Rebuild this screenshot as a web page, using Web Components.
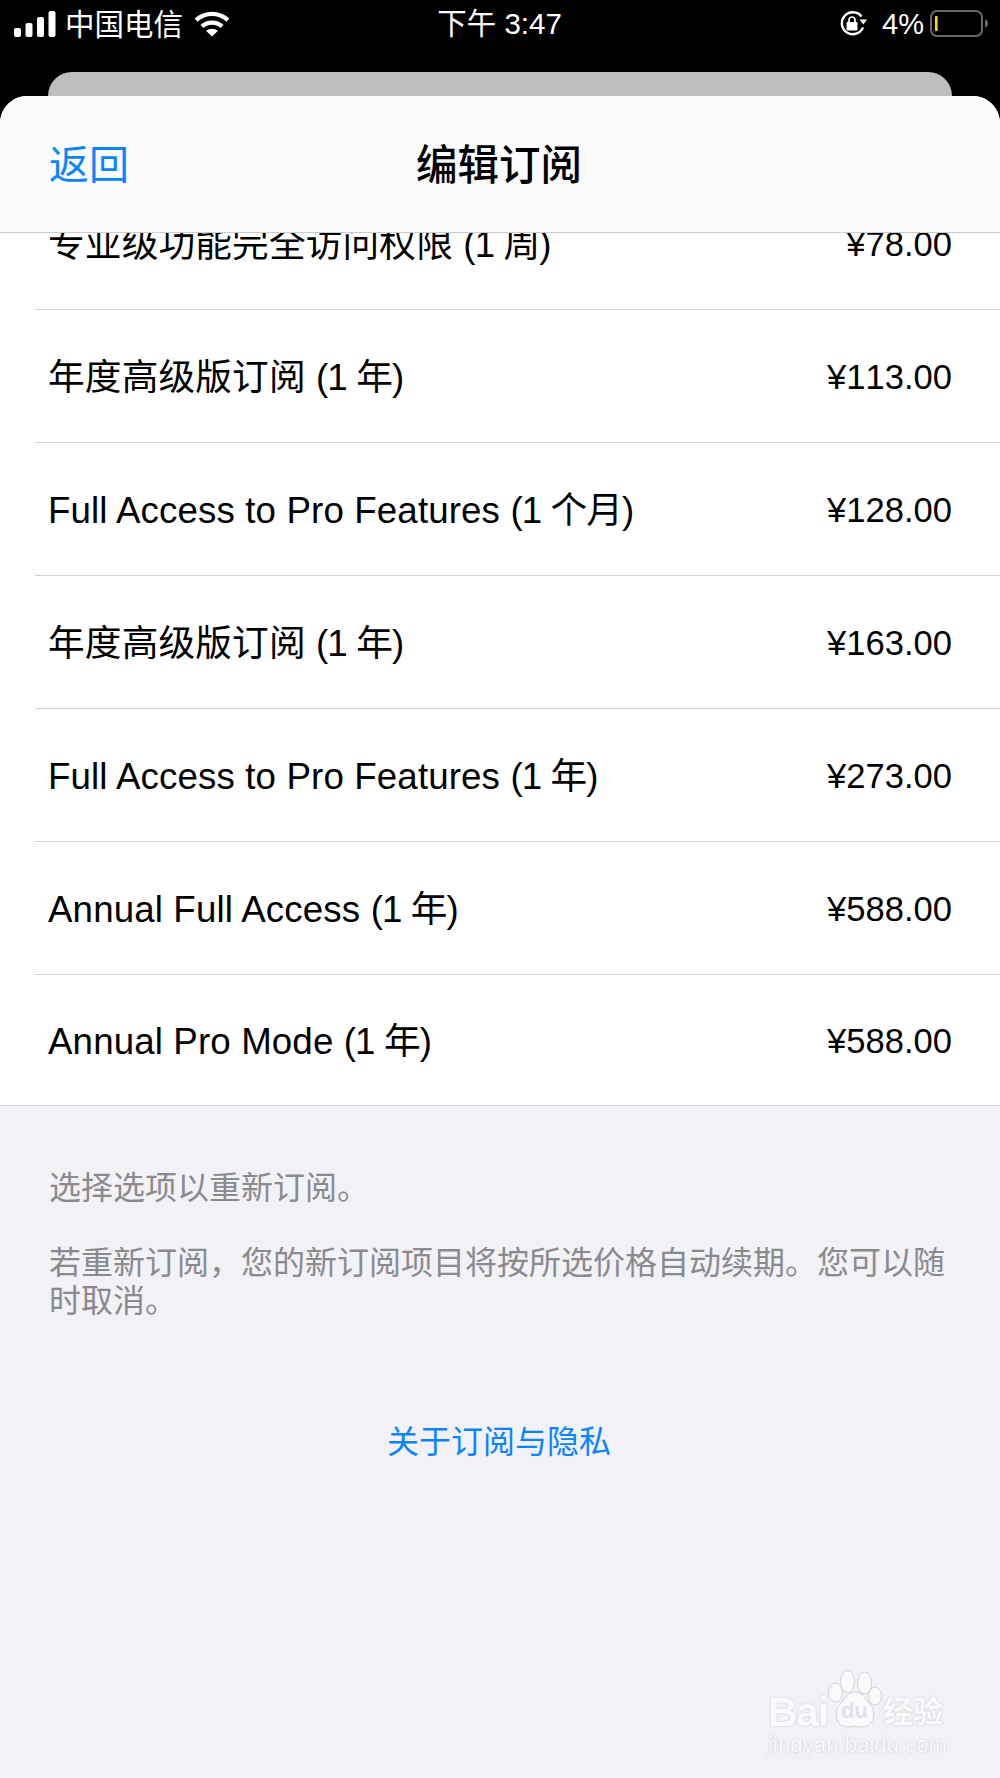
<!DOCTYPE html>
<html lang="zh">
<head>
<meta charset="utf-8">
<title>编辑订阅</title>
<style>
  html, body { margin: 0; background: #000; }
  body { width: 1000px; height: 1778px; overflow: hidden; font-family: "Liberation Sans", "Noto Sans CJK SC", sans-serif; }
</style>
</head>
<body>
<status-bar></status-bar>
<peek-card></peek-card>
<edit-sheet title-text="编辑订阅" back-text="返回">
  <price-row price="¥78.00">专业级功能完全访问权限 <span class="tail">(1 周)</span></price-row>
  <price-row price="¥113.00">年度高级版订阅 <span class="tail">(1 年)</span></price-row>
  <price-row price="¥128.00">Full Access to Pro Features <span class="tail">(1 个月)</span></price-row>
  <price-row price="¥163.00">年度高级版订阅 <span class="tail">(1 年)</span></price-row>
  <price-row price="¥273.00">Full Access to Pro Features <span class="tail">(1 年)</span></price-row>
  <price-row price="¥588.00">Annual Full Access <span class="tail">(1 年)</span></price-row>
  <price-row last price="¥588.00">Annual Pro Mode <span class="tail">(1 年)</span></price-row>
  <sheet-footer slot="footer"></sheet-footer>
</edit-sheet>
<baidu-mark></baidu-mark>

<script>
class StatusBar extends HTMLElement {
  constructor() {
    super()
    this.attachShadow({ mode: "open" })
    this.shadowRoot.innerHTML = `
      <style>
        :host { display: grid; grid-template-columns: 1fr auto 1fr; align-items: center; height: 44px; padding: 0 11px 28px 14px; color: #fff; font-size: 29.5px; }
        .left, .right { display: flex; align-items: center; }
        .left { gap: 9px; }
        .right { justify-content: flex-end; }
        .carrier { padding-bottom: 2px; }
        .time { margin-right: 4px; padding-bottom: 3px; }
        .pct { margin-left: 15px; margin-right: 6px; padding-top: 4px; font-size: 29px; }
        svg { display: block; margin-top: 2px; }
      </style>
      <div class="left">
        <svg width="42" height="26" viewBox="0 0 42 26" fill="#fff">
          <rect x="0" y="17" width="7" height="9" rx="2"/>
          <rect x="11.5" y="12" width="7" height="14" rx="2"/>
          <rect x="23" y="6" width="7" height="20" rx="2"/>
          <rect x="34.5" y="0" width="7" height="26" rx="2"/>
        </svg>
        <span class="carrier">中国电信</span>
        <svg width="36" height="26" viewBox="0 0 37 27" fill="none" stroke="#fff" stroke-width="4.4" style="margin-left:2px">
          <path d="M2 9.5C11.5 .8 25.500 .8 35 9.5"/>
          <path d="M8 16C14 10.6 23 10.6 29 16"/>
          <path d="M18.5 26.5L12.2 20.6C16 17.6 21 17.6 24.8 20.6Z" fill="#fff" stroke="none"/>
        </svg>
      </div>
      <div class="time">下午 3:47</div>
      <div class="right">
        <svg width="27" height="26" viewBox="0 0 27 26" fill="none">
          <path d="M21.6 5.5A11 11 0 1 0 23 16.5" stroke="#fff" stroke-width="2.4"/>
          <path d="M19.5 8.5h7.5l-3.7 5z" fill="#fff"/>
          <rect x="6.5" y="11" width="11" height="8.500" rx="1.2" fill="#fff"/>
          <path d="M9 11V9a3 3 0 0 1 6 0v2" stroke="#fff" stroke-width="1.7"/>
        </svg>
        <span class="pct">4%</span>
        <svg width="59" height="28" viewBox="0 0 59 28" fill="none">
          <rect x="1" y="1" width="51" height="25" rx="6" stroke="#6a6a6a" stroke-width="2"/>
          <rect x="5" y="6" width="2.6" height="15" rx="1" fill="#ffd60a"/>
          <path d="M55 9.5c2 .6 3 2 3 4s-1 3.400-3 4z" fill="#6a6a6a"/>
        </svg>
      </div>
    `
  }
}

class PeekCard extends HTMLElement {
  constructor() {
    super()
    this.attachShadow({ mode: "open" })
    this.shadowRoot.innerHTML = `
      <style>
        :host { display: block; height: 24px; margin: 0 48px; background: #bdbec0; border-radius: 24px 24px 0 0; }
      </style>
    `
  }
}

class EditSheet extends HTMLElement {
  constructor() {
    super()
    this.attachShadow({ mode: "open" })
    this.shadowRoot.innerHTML = `
      <style>
        :host { display: block; height: 1682px; overflow: hidden; background: #f1f1f6; border-radius: 27px 27px 0 0; }
        .nav {
          position: relative; z-index: 1;
          display: grid; grid-template-columns: 1fr auto 1fr; align-items: center;
          height: 132px; padding: 0 51px 4px 49px;
          background: #fbfbfd; border-bottom: 1px solid #cdcdcf;
        }
        .back { color: #0a84ff; font-size: 40px; }
        .title { color: #000; font-size: 41.5px; font-weight: 500; }
        .list { margin-top: -56px; background: #fff; border-bottom: 1px solid #d2d2d4; }
      </style>
      <div class="nav">
        <span class="back"></span>
        <span class="title"></span>
      </div>
      <div class="list"><slot></slot></div>
      <slot name="footer"></slot>
    `
    this.shadowRoot.querySelector(".back").textContent = this.getAttribute("back-text")
    this.shadowRoot.querySelector(".title").textContent = this.getAttribute("title-text")
  }
}

class PriceRow extends HTMLElement {
  constructor() {
    super()
    this.attachShadow({ mode: "open" })
    this.shadowRoot.innerHTML = `
      <style>
        :host { display: block; padding-left: 35px; color: #000; font-size: 36.7px; }
        .row { display: flex; justify-content: space-between; align-items: center; height: 132px; padding-right: 48px; padding-left: 13px; border-bottom: 1px solid #d2d2d4; }
        :host([last]) .row { height: 130px; border-bottom: 0; }
        .label { padding-bottom: 5px; letter-spacing: .13px; }
        ::slotted(.tail) { letter-spacing: -.9px; }
        .price { padding-top: 2px; font-size: 34.6px; font-kerning: none; }
      </style>
      <div class="row">
        <span class="label"><slot></slot></span>
        <span class="price"></span>
      </div>
    `
    this.shadowRoot.querySelector(".price").textContent = this.getAttribute("price")
  }
}

class SheetFooter extends HTMLElement {
  constructor() {
    super()
    this.attachShadow({ mode: "open" })
    this.shadowRoot.innerHTML = `
      <style>
        :host { display: block; padding: 63px 48px 0 49px; color: #8a8a8e; font-size: 32px; line-height: 38px; }
        p { margin: 0 0 37px; }
        a { display: block; margin-top: 103px; padding-right: 3px; color: #0a84ff; text-align: center; text-decoration: none; }
      </style>
      <p>选择选项以重新订阅。</p>
      <p>若重新订阅，您的新订阅项目将按所选价格自动续期。您可以随时取消。</p>
      <a>关于订阅与隐私</a>
    `
  }
}

class BaiduMark extends HTMLElement {
  constructor() {
    super()
    this.attachShadow({ mode: "open" })
    this.shadowRoot.innerHTML = `
      <style>
        :host { position: absolute; left: 766px; top: 1668px; width: 192px; height: 100px; color: #fafafc; text-shadow: 0 0 2px #c2c2c6; }
        svg { position: absolute; left: 62px; top: 2px; }
        .brand { position: absolute; left: 2px; top: 22px; font-size: 41px; font-weight: 700; line-height: 44px; letter-spacing: -1.5px; }
        .du { position: absolute; left: 75px; top: 31px; font-size: 22px; line-height: 24px; font-weight: 700; color: #e2e2e6; text-shadow: none; }
        .jy { position: absolute; left: 117px; top: 26px; font-size: 30px; line-height: 36px; font-weight: 700; }
        .url { position: absolute; left: 2px; top: 65px; font-size: 21.6px; line-height: 24px; letter-spacing: .3px; white-space: nowrap; }
      </style>
      <svg width="54" height="58" viewBox="0 0 54 58" fill="#fafafc" stroke="#d2d2d6" stroke-width="1">
        <ellipse cx="7.500" cy="22.500" rx="7" ry="9.500"/>
        <ellipse cx="19.500" cy="11.500" rx="7" ry="11"/>
        <ellipse cx="36.500" cy="13" rx="7" ry="11"/>
        <ellipse cx="47" cy="26" rx="6.500" ry="9"/>
        <path d="M27 22c8 0 10 7 15 12 6 6 6 23-9 23-2 0-4-.8-6-.8s-4 .8-6 .8c-15 0-15-17-9-23 5-5 7-12 15-12z"/>
      </svg>
      <span class="brand">Bai</span>
      <span class="du">du</span>
      <span class="jy">经验</span>
      <span class="url">jingyan.baidu.com</span>
    `
  }
}

customElements.define("status-bar", StatusBar)
customElements.define("peek-card", PeekCard)
customElements.define("edit-sheet", EditSheet)
customElements.define("price-row", PriceRow)
customElements.define("sheet-footer", SheetFooter)
customElements.define("baidu-mark", BaiduMark)
</script>
</body>
</html>
